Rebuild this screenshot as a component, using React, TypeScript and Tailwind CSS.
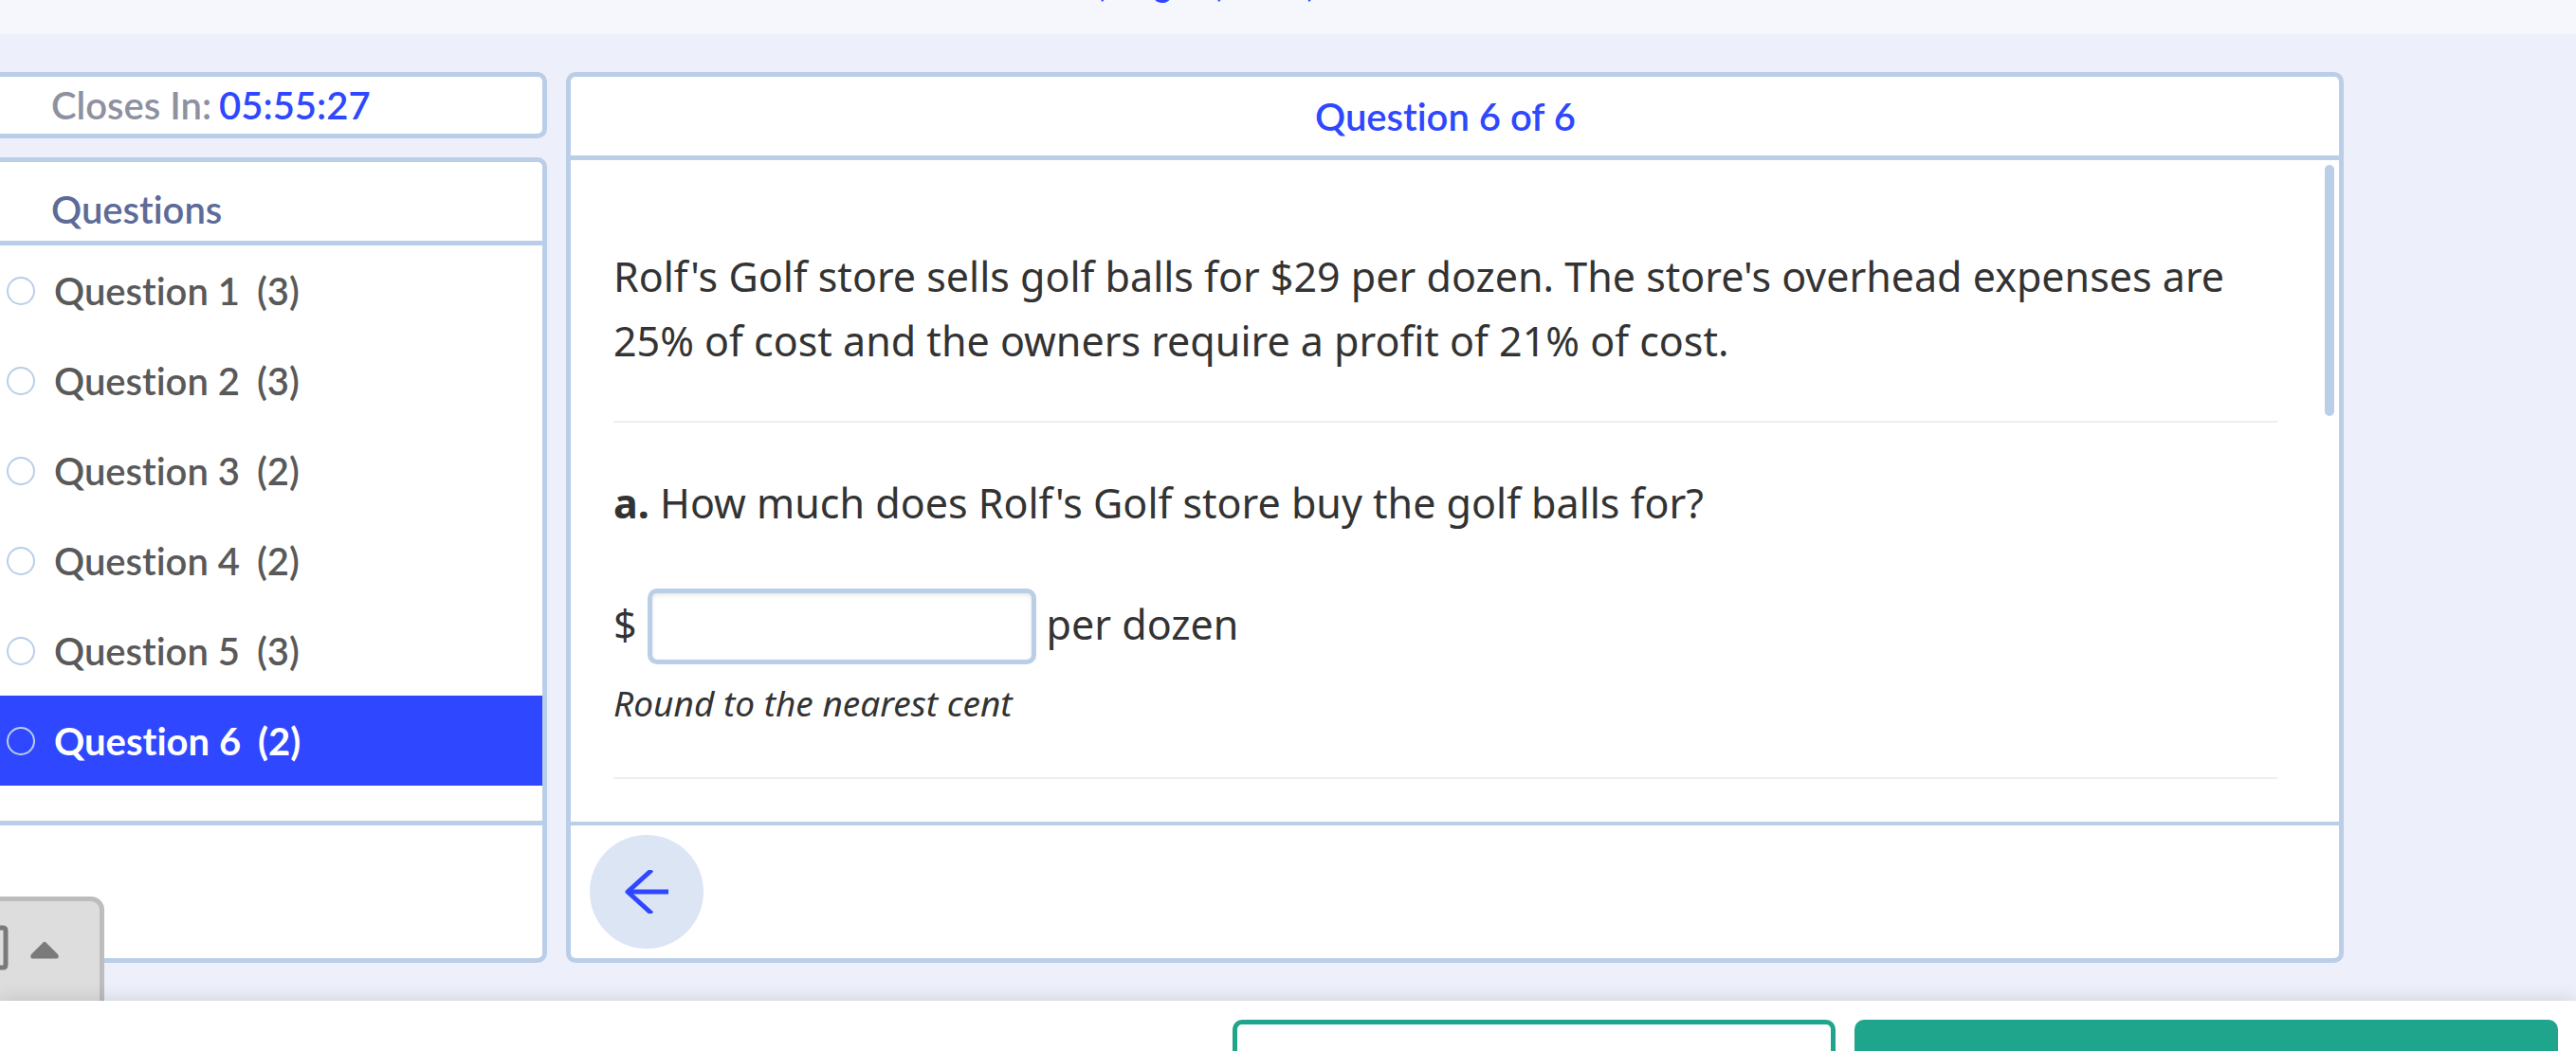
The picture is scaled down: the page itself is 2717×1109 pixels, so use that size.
import React, { useState } from "react";

const questions = [
  { id: 1, points: 3 },
  { id: 2, points: 3 },
  { id: 3, points: 2 },
  { id: 4, points: 2 },
  { id: 5, points: 3 },
  { id: 6, points: 2 },
];

const ArrowLeft = () => (
  <svg viewBox="0 0 46 46" className="w-[46px] h-[46px]" fill="none" stroke="#2f48ff">
    <path d="M46 23H4" strokeWidth="5" />
    <path d="M28.500 0L3 23L28.500 46" strokeWidth="5" strokeLinejoin="round" />
  </svg>
);

const Sidebar = ({ current, onSelect }: { current: number; onSelect: (id: number) => void }) => {
  return (
    <aside className="flex flex-col gap-5 w-[577px] shrink-0">
      <div className="h-[70px] shrink-0 flex items-center gap-2 pl-[54px] bg-white border-5 border-l-0 border-[#bacee8] rounded-r-[10px] text-[40px] leading-[48px] font-semibold">
        <span className="text-[#8e91a0]">Closes In:</span>
        <span className="text-[#2f48ff]">05:55:27</span>
      </div>
      <div className="flex-1 flex flex-col bg-white border-5 border-l-0 border-[#bacee8] rounded-r-[10px]">
        <h2 className="h-[88px] shrink-0 pl-[54px] pt-[26px] border-b-5 border-[#bacee8] text-[40px] leading-[48px] font-semibold text-[#5d6b98]">
          Questions
        </h2>
        <ul className="flex-1">
          {questions.map((q) => (
            <li key={q.id}>
              <label
                className={
                  q.id === current
                    ? "h-[95px] flex items-center pl-[7px] text-[40px] leading-[48px] font-bold cursor-pointer bg-[#2f48ff] text-white"
                    : "h-[95px] flex items-center pl-[7px] text-[40px] leading-[48px] font-semibold cursor-pointer text-[#595959]"
                }
              >
                <input
                  type="radio"
                  name="question"
                  checked={q.id === current}
                  onChange={() => onSelect(q.id)}
                  className="appearance-none w-[30px] h-[30px] mr-5 rounded-full border-2 border-[#bacee8]"
                />
                <span>Question {q.id}</span>
                <span className="ml-[18px]">({q.points})</span>
              </label>
            </li>
          ))}
        </ul>
        <div className="h-[145px] shrink-0 border-t-5 border-[#bacee8]"></div>
      </div>
    </aside>
  );
};

const App = () => {
  const [current, setCurrent] = useState(6);
  const [price, setPrice] = useState("");

  return (
    <div className="relative h-screen overflow-hidden flex flex-col bg-[#edf0fa] font-['Lato',sans-serif] [font-variant-ligatures:none]">
      <header className="h-9 shrink-0 overflow-hidden flex items-end justify-center pl-5 pb-8 bg-[#f6f7fd]">
        <p className="shrink-0 text-[34px] leading-[40px] font-bold text-[#2f48ff]">Fri, Aug 10, 2021, 11:59 PM EDT</p>
      </header>

      <main className="flex-1 min-h-0 flex gap-5 pt-10 pb-10 pr-[245px]">
        <Sidebar current={current} onSelect={setCurrent} />

        <section className="flex-1 min-w-0 flex flex-col bg-white border-5 border-[#bacee8] rounded-[10px]">
          <h1 className="h-[88px] shrink-0 flex items-center justify-center pr-5 border-b-5 border-[#bacee8] text-[40px] leading-[48px] font-semibold text-[#2f48ff]">
            Question {current} of 6
          </h1>
          <div className="flex-1 min-h-0 flex overflow-hidden">
            <div className="flex-1 pl-[45px] pr-[45px] pt-[89px] font-['Noto_Sans',sans-serif] text-[43px] leading-[68px] text-[#333333]">
              <p>
                Rolf's Golf store sells golf balls for $29 per dozen. The store's overhead expenses are 25% of cost
                and the owners require a profit of 21% of cost.
              </p>
              <hr className="mt-[50px] mb-[51px] border-t-2 border-[#eeeeee]" />
              <p>
                <b>a.</b> How much does Rolf's Golf store buy the golf balls for?
              </p>
              <label className="mt-[56px] flex items-center gap-[11px]">
                <span className="pb-1">$</span>
                <input
                  type="text"
                  value={price}
                  onChange={(e) => setPrice(e.target.value)}
                  className="w-[410px] h-20 px-4 border-5 border-[#bacee8] rounded-[10px] bg-white shadow-[inset_0_2px_4px_rgba(0,0,0,0.1)] outline-none"
                />
                <span className="pb-1">per dozen</span>
              </label>
              <p className="mt-[7px] text-[37px] italic">Round to the nearest cent</p>
              <hr className="mt-[44px] border-t-2 border-[#eeeeee]" />
            </div>
            <div className="w-[20px] pt-[5px]">
              <div className="w-[10px] h-[265px] ml-[5px] rounded-full bg-[#bacee8]"></div>
            </div>
          </div>
          <div className="h-[144px] shrink-0 flex items-center pl-5 border-t-4 border-[#bacee8]">
            <button
              type="button"
              aria-label="Previous question"
              onClick={() => setCurrent(Math.max(1, current - 1))}
              className="w-[120px] h-[120px] flex items-center justify-center rounded-full bg-[#dce5f4] cursor-pointer"
            >
              <ArrowLeft />
            </button>
          </div>
        </section>
      </main>

      {/* calculator tab sits over the sidebar */}
      <button
        type="button"
        aria-label="Open calculator"
        className="absolute left-0 bottom-[49px] w-[110px] h-[114px] flex items-start pt-[25px] bg-[#dddddd] border-t-5 border-r-5 border-[#bdbdbd] rounded-tr-[14px] cursor-pointer"
      >
        <svg viewBox="0 0 62 48" className="w-[62px] h-[48px]">
          <path d="M0 3H3Q6 3 6 6V42Q6 45 3 45H0" fill="none" stroke="#7a7a7a" strokeWidth="5" />
          <path d="M45.500 18.500Q47 17 48.500 18.500L61 31Q63 35 59.500 35.500H34.500Q31 35 33 31Z" fill="#7a7a7a" />
        </svg>
      </button>

      <footer className="relative h-[53px] shrink-0 flex justify-end gap-5 pt-5 pr-[19px] bg-white shadow-[0_0_20px_rgba(0,0,0,0.15)]">
        <button type="button" aria-label="Save" className="w-[636px] h-[100px] bg-white border-5 border-[#1fa58b] rounded-[10px]"></button>
        <button type="button" aria-label="Submit" className="w-[742px] h-[100px] bg-[#1fa58b] rounded-[10px]"></button>
      </footer>
    </div>
  );
};

export default App;
